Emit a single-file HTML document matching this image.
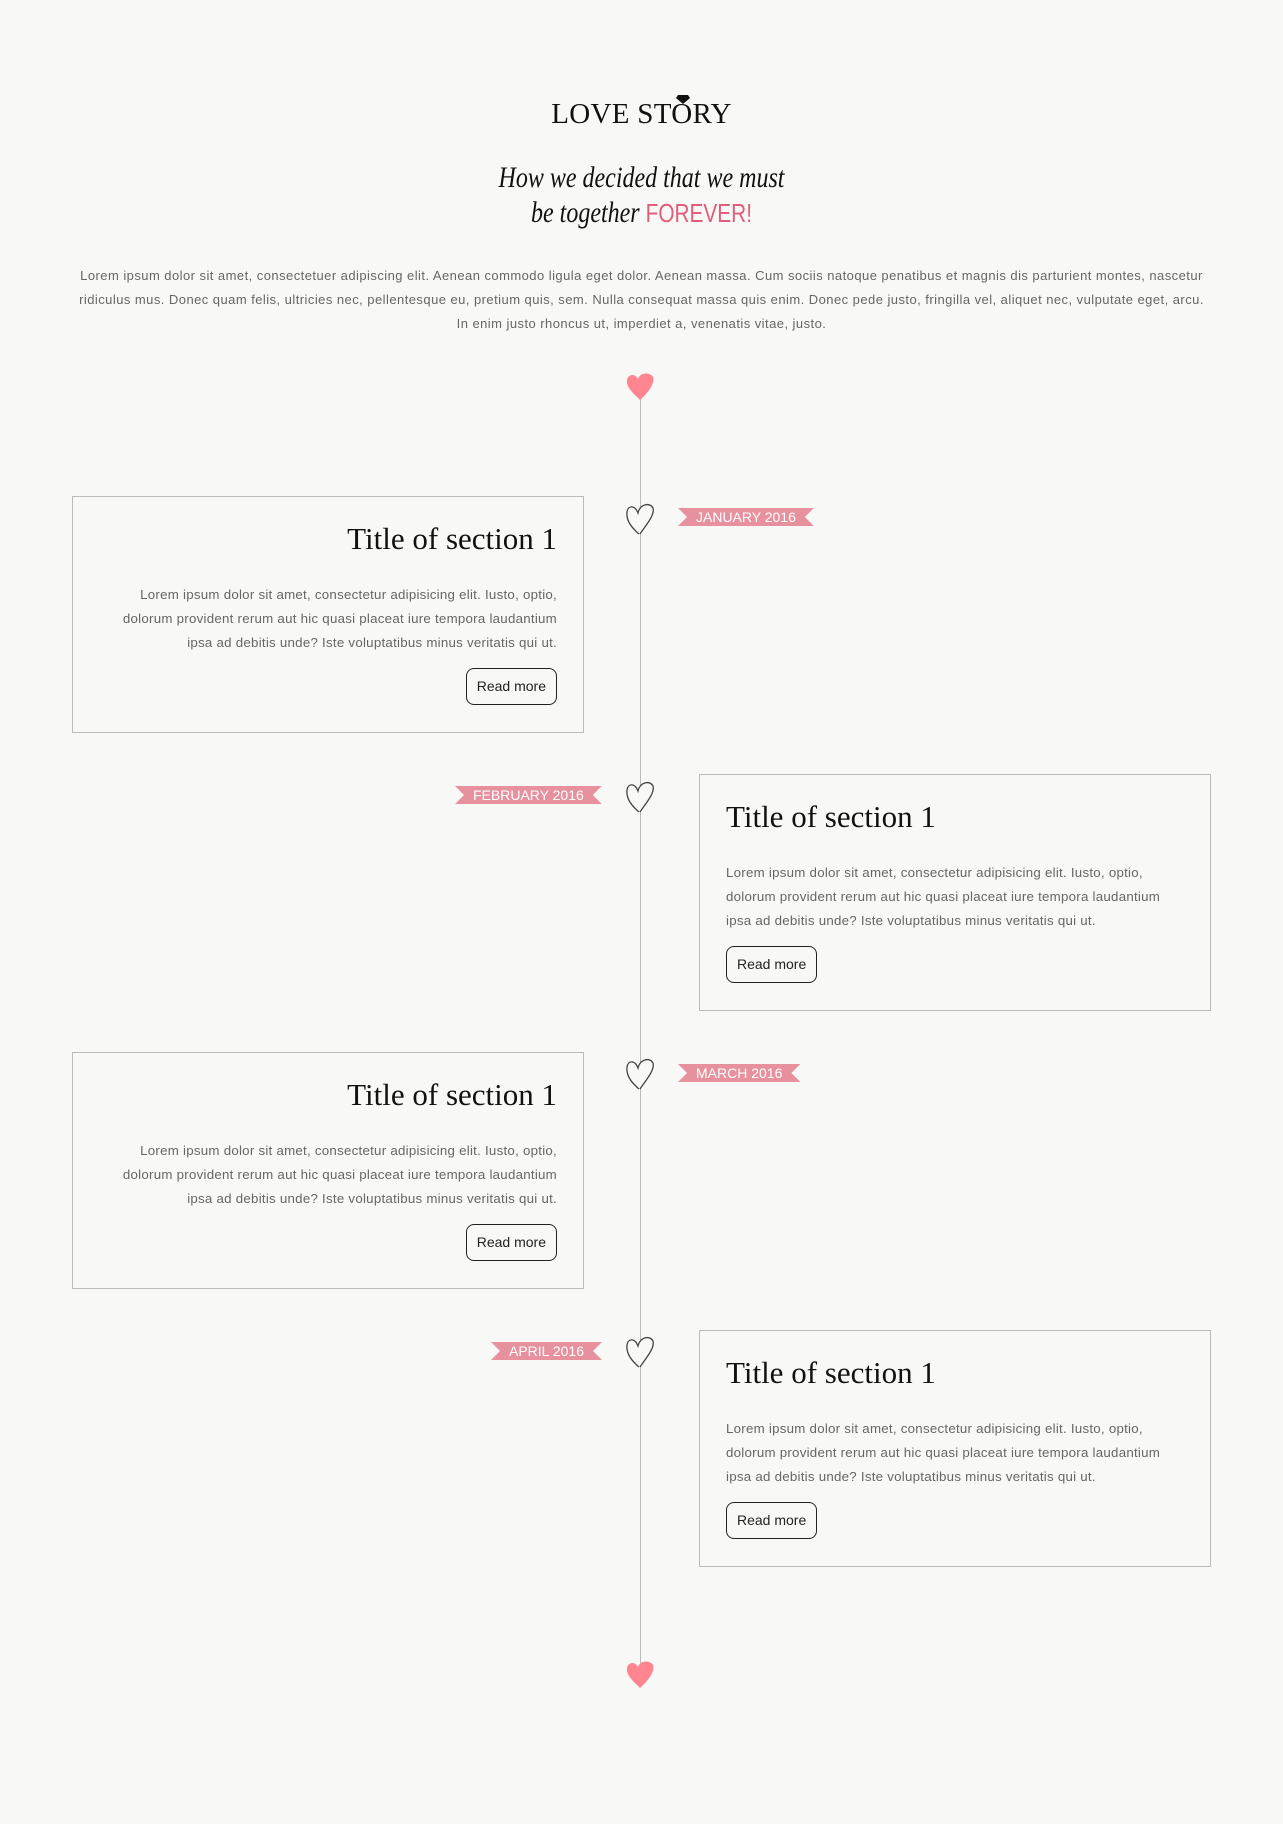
<!DOCTYPE html>
<html><head><meta charset="utf-8"><style>
*{margin:0;padding:0;box-sizing:border-box}
body{width:1283px;height:1824px;background:#f8f8f6;position:relative;font-family:"Liberation Sans",sans-serif;color:#555;overflow:hidden}
.abs{position:absolute}
h1{position:absolute;top:98px;left:0;width:1283px;text-align:center;font-family:"Liberation Serif",serif;font-weight:normal;font-size:29px;color:#111;letter-spacing:0.3px}
.script{position:absolute;top:160px;left:0;width:1283px;text-align:center;font-family:"Liberation Serif",serif;font-style:italic;font-size:30px;line-height:35px;color:#111;transform:scaleX(0.8)}
.script span{font-style:normal;color:#e35d7a;font-family:"Liberation Sans Narrow","Liberation Sans",sans-serif;font-size:26px}
.intro{position:absolute;top:264px;left:72px;width:1139px;text-align:center;font-size:13px;line-height:24px;color:#666;letter-spacing:0.45px}
.line{position:absolute;left:640px;top:398px;width:1px;height:1272px;background:#bbb}
.card{position:absolute;width:512px;height:237px;border:1px solid #bbb;background:#f8f8f6;padding:22px 26px}
.card h2{font-family:"Liberation Serif",serif;font-weight:normal;font-size:31px;color:#111;line-height:40px}
.card p{margin-top:24px;font-size:13.3px;line-height:24px;color:#666;letter-spacing:0.25px}
.btn{display:inline-block;margin-top:13px;border:1px solid #222;border-radius:8px;padding:0 10px;height:37px;line-height:35px;font-size:14px;color:#222}
.l{text-align:right}.r{text-align:left}
.rib{position:absolute;height:18px;background:#e8919e;color:#fff;font-size:14px;line-height:19px;padding:0 18px;clip-path:polygon(0 0,100% 0,calc(100% - 9px) 50%,100% 100%,0 100%,9px 50%)}
</style></head><body>
<h1>LOVE ST<span style="position:relative">O<svg class="abs" style="left:5px;top:-4px" width="14" height="10" viewBox="0 0 14 10"><path d="M2 1h10l2 3-7 6-7-6z" fill="#111"/></svg></span>RY</h1>
<div class="script">How we decided that we must<br>be together <span>FOREVER!</span></div>
<div class="intro">Lorem ipsum dolor sit amet, consectetuer adipiscing elit. Aenean commodo ligula eget dolor. Aenean massa. Cum sociis natoque penatibus et magnis dis parturient montes, nascetur ridiculus mus. Donec quam felis, ultricies nec, pellentesque eu, pretium quis, sem. Nulla consequat massa quis enim. Donec pede justo, fringilla vel, aliquet nec, vulputate eget, arcu. In enim justo rhoncus ut, imperdiet a, venenatis vitae, justo.</div>
<div class="line"></div>
<svg class="abs" style="left:624px;top:370px" width="32" height="32" viewBox="0 0 32 32"><path d="M16 30C8 22 2 17 3 10 4 4 11 3 14 9 16 2 26 2 29 7 31 13 25 22 16 30z" fill="#ff8591"/></svg>
<svg class="abs" style="left:624px;top:1658px" width="32" height="32" viewBox="0 0 32 32"><path d="M16 30C8 22 2 17 3 10 4 4 11 3 14 9 16 2 26 2 29 7 31 13 25 22 16 30z" fill="#ff8591"/></svg>

<svg class="abs" style="left:624px;top:501px" width="32" height="34" viewBox="0 0 32 34"><path d="M15 33C8 27 2 20 3 11 4 4 11 4 14 12 16 3 26 1 29 7 31 14 22 24 16 33" fill="#f8f8f6" stroke="#444" stroke-width="1.3"/></svg>
<svg class="abs" style="left:624px;top:779px" width="32" height="34" viewBox="0 0 32 34"><path d="M15 33C8 27 2 20 3 11 4 4 11 4 14 12 16 3 26 1 29 7 31 14 22 24 16 33" fill="#f8f8f6" stroke="#444" stroke-width="1.3"/></svg>
<svg class="abs" style="left:624px;top:1056px" width="32" height="34" viewBox="0 0 32 34"><path d="M15 33C8 27 2 20 3 11 4 4 11 4 14 12 16 3 26 1 29 7 31 14 22 24 16 33" fill="#f8f8f6" stroke="#444" stroke-width="1.3"/></svg>
<svg class="abs" style="left:624px;top:1334px" width="32" height="34" viewBox="0 0 32 34"><path d="M15 33C8 27 2 20 3 11 4 4 11 4 14 12 16 3 26 1 29 7 31 14 22 24 16 33" fill="#f8f8f6" stroke="#444" stroke-width="1.3"/></svg>

<div class="rib" style="left:678px;top:508px">JANUARY 2016</div>
<div class="rib" style="left:455px;top:786px">FEBRUARY 2016</div>
<div class="rib" style="left:678px;top:1064px">MARCH 2016</div>
<div class="rib" style="left:491px;top:1342px">APRIL 2016</div>

<div class="card l" style="left:72px;top:496px"><h2>Title of section 1</h2><p>Lorem ipsum dolor sit amet, consectetur adipisicing elit. Iusto, optio, dolorum provident rerum aut hic quasi placeat iure tempora laudantium ipsa ad debitis unde? Iste voluptatibus minus veritatis qui ut.</p><span class="btn">Read more</span></div>
<div class="card r" style="left:699px;top:774px"><h2>Title of section 1</h2><p>Lorem ipsum dolor sit amet, consectetur adipisicing elit. Iusto, optio, dolorum provident rerum aut hic quasi placeat iure tempora laudantium ipsa ad debitis unde? Iste voluptatibus minus veritatis qui ut.</p><span class="btn">Read more</span></div>
<div class="card l" style="left:72px;top:1052px"><h2>Title of section 1</h2><p>Lorem ipsum dolor sit amet, consectetur adipisicing elit. Iusto, optio, dolorum provident rerum aut hic quasi placeat iure tempora laudantium ipsa ad debitis unde? Iste voluptatibus minus veritatis qui ut.</p><span class="btn">Read more</span></div>
<div class="card r" style="left:699px;top:1330px"><h2>Title of section 1</h2><p>Lorem ipsum dolor sit amet, consectetur adipisicing elit. Iusto, optio, dolorum provident rerum aut hic quasi placeat iure tempora laudantium ipsa ad debitis unde? Iste voluptatibus minus veritatis qui ut.</p><span class="btn">Read more</span></div>
</body></html>
